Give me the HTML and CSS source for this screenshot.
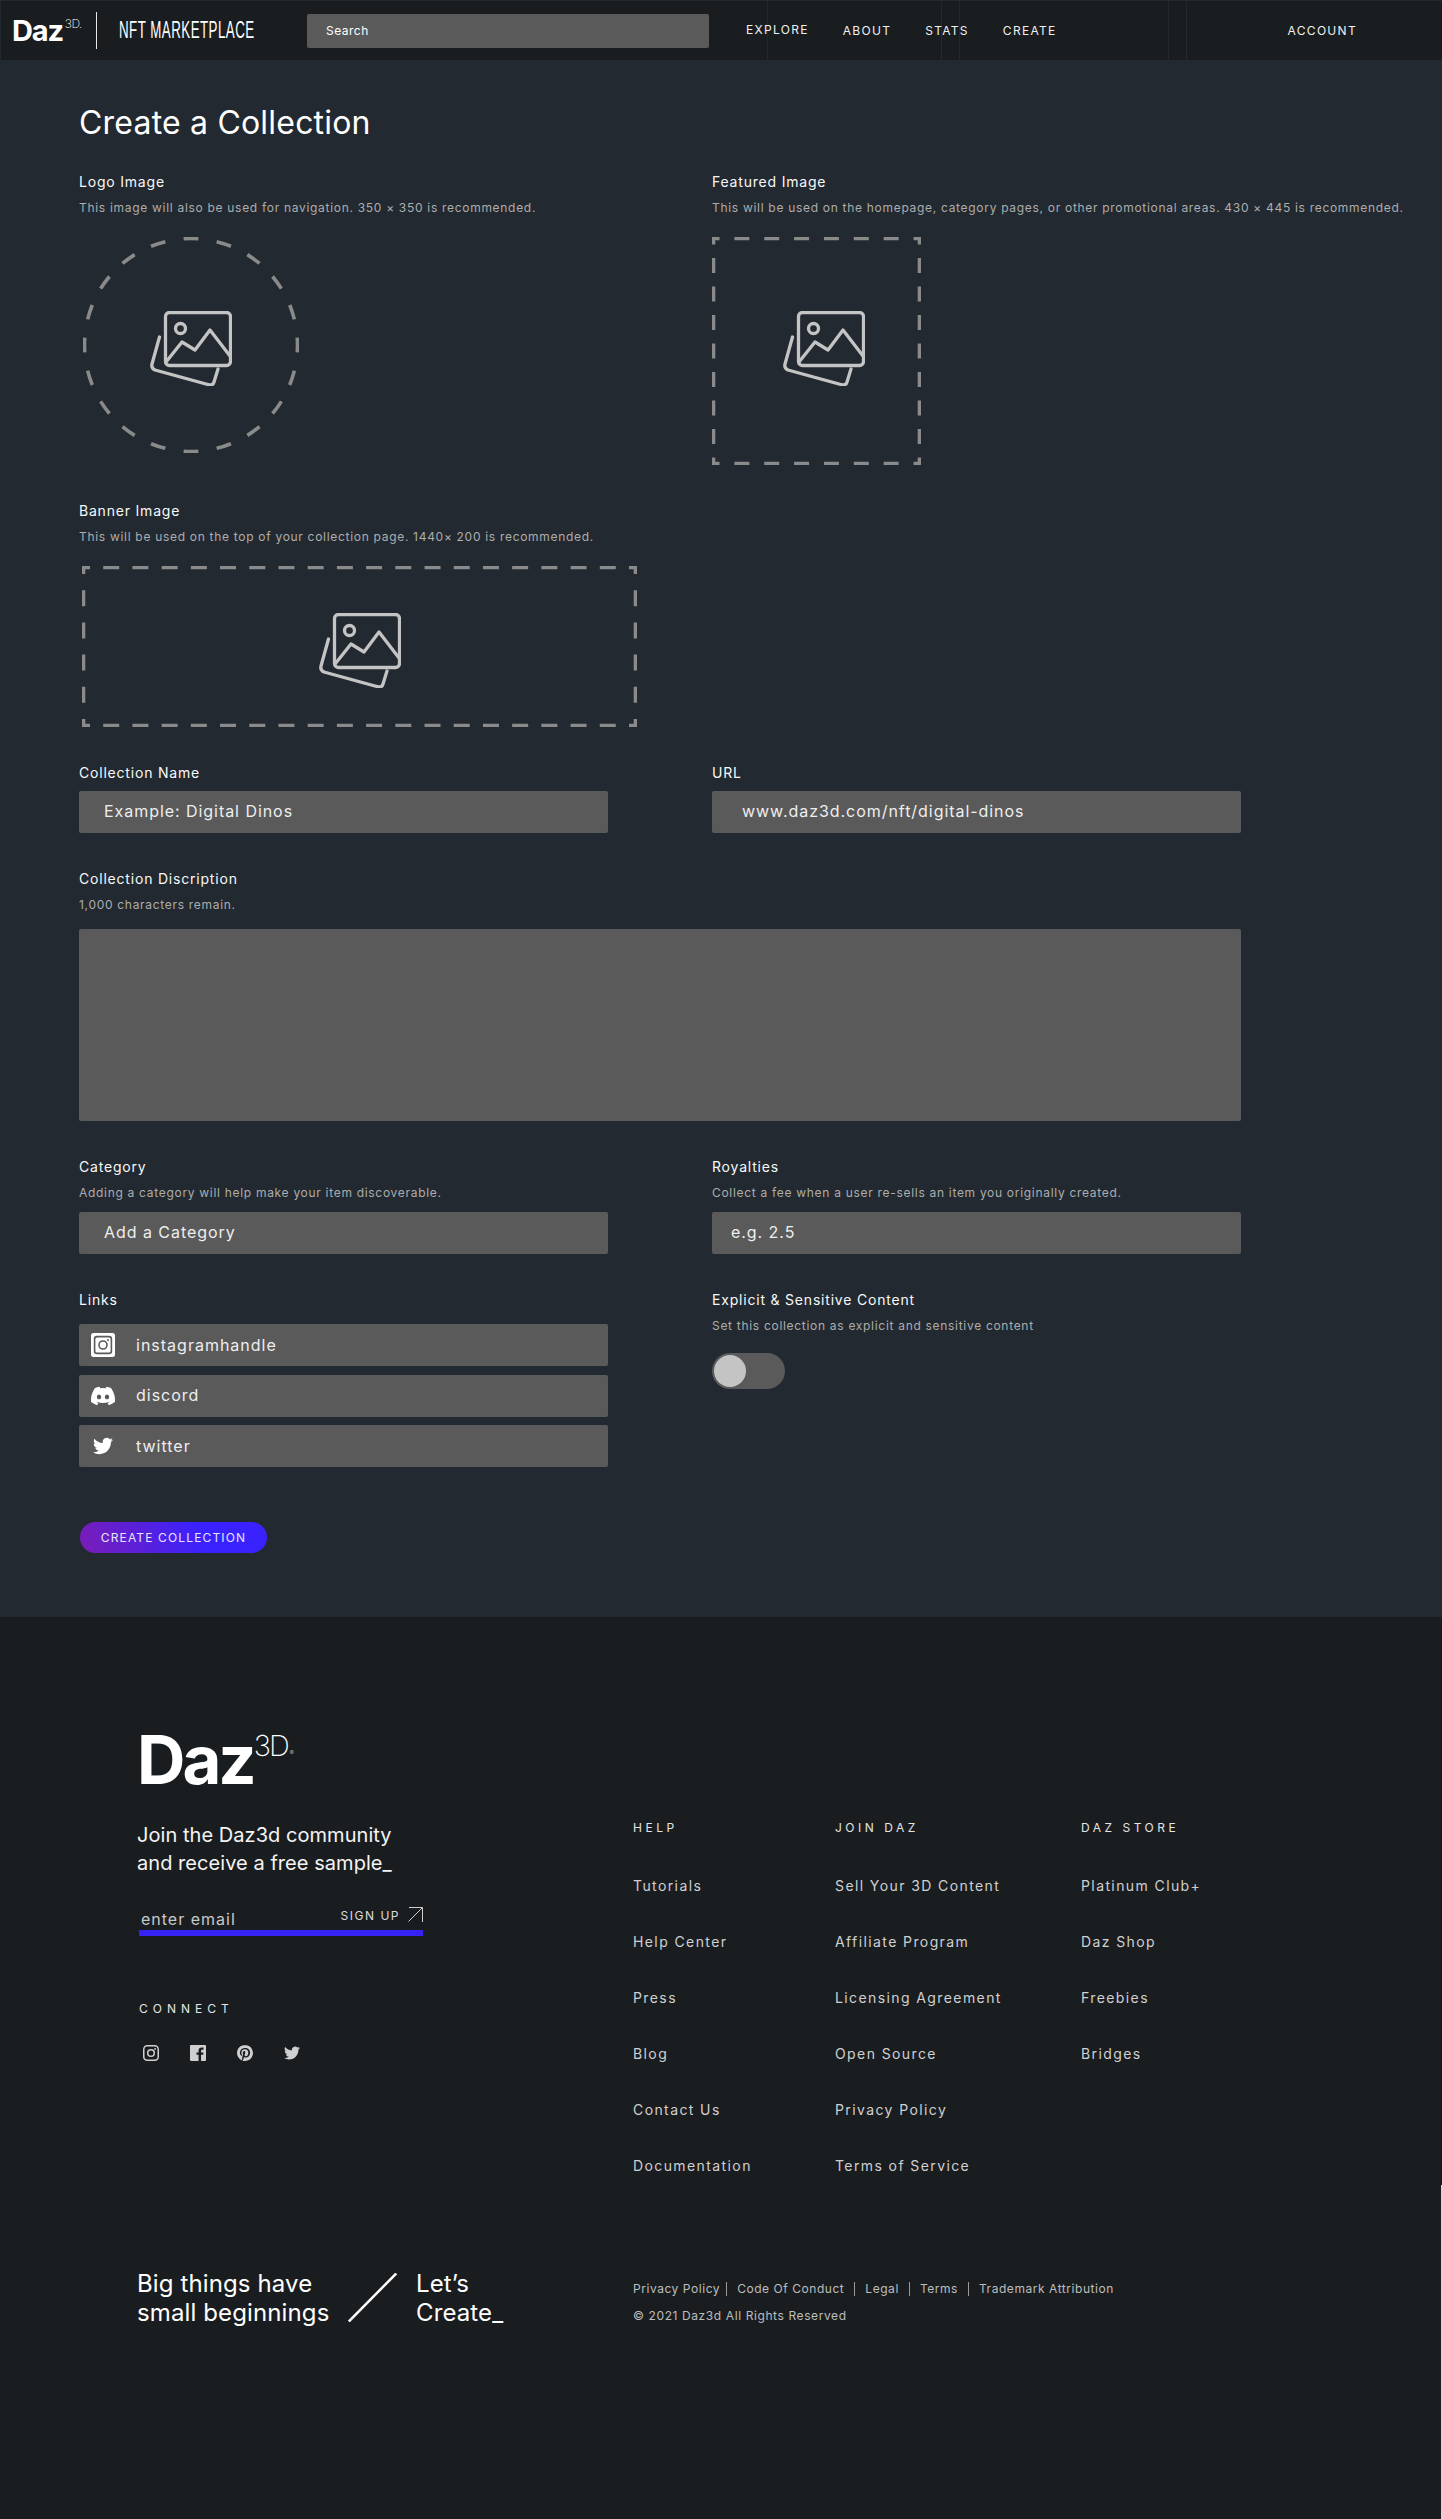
FILE: index.html
```html
<!DOCTYPE html>
<html lang="en">
<head>
  <meta charset="UTF-8" />
  <title>Create a Collection - Daz3D NFT Marketplace</title>
  <link rel="stylesheet" href="styles.css">
</head>
<body>
  <svg class="sprite" width="0" height="0">
    <symbol id="picture" viewBox="0 0 82 75">
      <g fill="none" stroke="currentColor" stroke-width="3.3" stroke-linecap="round" stroke-linejoin="round">
        <rect x="15.5" y="1.5" width="65" height="53" rx="4" />
        <circle cx="30.5" cy="17.5" r="5" />
        <path d="M16 51 L32 31 L45 39 L60 19 L80 45" />
        <path d="M9.5 26 L2 53 Q1 57 5 59 L58 73.5 Q63 75 64 71 L68 58" />
      </g>
    </symbol>
    <symbol id="twitter" viewBox="0 0 24 24">
      <path fill="currentColor" d="M23.953 4.57a10 10 0 01-2.825.775 4.958 4.958 0 002.163-2.723c-.951.555-2.005.959-3.127 1.184a4.92 4.92 0 00-8.384 4.482C7.69 8.095 4.067 6.13 1.64 3.162a4.822 4.822 0 00-.666 2.475c0 1.71.87 3.213 2.188 4.096a4.904 4.904 0 01-2.228-.616v.06a4.923 4.923 0 003.946 4.827 4.996 4.996 0 01-2.212.085 4.936 4.936 0 004.604 3.417 9.867 9.867 0 01-6.102 2.105c-.39 0-.779-.023-1.17-.067a13.995 13.995 0 007.557 2.209c9.053 0 13.998-7.496 13.998-13.985 0-.21 0-.42-.015-.63A9.935 9.935 0 0024 4.59z" />
    </symbol>
  </svg>

  <header class="topbar">
    <div class="brand">
      <span class="brand-daz">Daz</span><span class="brand-3d">3D.</span>
    </div>
    <div class="brand-title"><span>NFT MARKETPLACE</span></div>
    <div class="search">Search</div>
    <nav class="nav">
      <a class="nav-raised">EXPLORE</a>
      <a>ABOUT</a>
      <a>STATS</a>
      <a>CREATE</a>
    </nav>
    <a class="account">ACCOUNT</a>
  </header>

  <main class="page">
    <h1>Create a Collection</h1>

    <div class="row row-first">
      <section>
        <div class="label">Logo Image</div>
        <div class="hint">This image will also be used for navigation. 350 × 350 is recommended.</div>
        <div class="drop drop-logo">
          <svg class="dashes" width="216" height="216">
            <circle cx="108" cy="108" r="106.5" pathLength="20" stroke-dasharray="0.45 0.55" stroke-dashoffset="0.225" />
          </svg>
          <svg class="picture"><use href="#picture" /></svg>
        </div>
      </section>
      <section>
        <div class="label">Featured Image</div>
        <div class="hint nowrap">This will be used on the homepage, category pages, or other promotional areas. 430 × 445 is recommended.</div>
        <div class="drop drop-featured">
          <svg class="dashes" width="209" height="228">
            <line x1="0" y1="1.5" x2="209" y2="1.5" stroke-dasharray="15 14.86" stroke-dashoffset="7.5" />
            <line x1="0" y1="226.5" x2="209" y2="226.5" stroke-dasharray="15 14.86" stroke-dashoffset="7.5" />
            <line x1="1.5" y1="0" x2="1.5" y2="228" stroke-dasharray="15 13.5" stroke-dashoffset="7.5" />
            <line x1="207.5" y1="0" x2="207.5" y2="228" stroke-dasharray="15 13.5" stroke-dashoffset="7.5" />
          </svg>
          <svg class="picture"><use href="#picture" /></svg>
        </div>
      </section>
    </div>

    <section class="block">
      <div class="label">Banner Image</div>
      <div class="hint">This will be used on the top of your collection page. 1440× 200 is recommended.</div>
      <div class="drop drop-banner">
        <svg class="dashes" width="555" height="161">
          <line x1="0" y1="1.5" x2="555" y2="1.5" stroke-dasharray="16 13.21" stroke-dashoffset="8" />
          <line x1="0" y1="159.5" x2="555" y2="159.5" stroke-dasharray="16 13.21" stroke-dashoffset="8" />
          <line x1="1.5" y1="0" x2="1.5" y2="161" stroke-dasharray="16 16.2" stroke-dashoffset="8" />
          <line x1="553.5" y1="0" x2="553.5" y2="161" stroke-dasharray="16 16.2" stroke-dashoffset="8" />
        </svg>
        <svg class="picture"><use href="#picture" /></svg>
      </div>
    </section>

    <div class="row block">
      <section>
        <div class="label label-tight">Collection Name</div>
        <div class="field">Example: Digital Dinos</div>
      </section>
      <section>
        <div class="label label-tight">URL</div>
        <div class="field field-url">www.daz3d.com/nft/digital-dinos</div>
      </section>
    </div>

    <section class="block">
      <div class="label">Collection Discription</div>
      <div class="hint">1,000 characters remain.</div>
      <div class="textarea"></div>
    </section>

    <div class="row block">
      <section>
        <div class="label">Category</div>
        <div class="hint">Adding a category will help make your item discoverable.</div>
        <div class="field field-hinted">Add a Category</div>
      </section>
      <section>
        <div class="label">Royalties</div>
        <div class="hint">Collect a fee when a user re-sells an item you originally created.</div>
        <div class="field field-hinted field-royalty">e.g. 2.5</div>
      </section>
    </div>

    <div class="row block">
      <section>
        <div class="label">Links</div>
        <div class="links">
          <div class="link-row">
            <svg class="link-icon" viewBox="0 0 24 24">
              <rect width="24" height="24" rx="2.5" fill="#fff" />
              <rect x="3.6" y="3.6" width="16.8" height="16.8" rx="2.5" fill="none" stroke="#5a5a5a" stroke-width="1.6" />
              <circle cx="12" cy="12" r="4" fill="none" stroke="#5a5a5a" stroke-width="1.6" />
              <circle cx="17" cy="7" r="1" fill="#5a5a5a" />
            </svg>
            instagramhandle
          </div>
          <div class="link-row">
            <svg class="link-icon" viewBox="0 0 24 24">
              <path fill="#fff" d="M20.317 4.37a19.791 19.791 0 0 0-4.885-1.515.074.074 0 0 0-.079.037c-.21.375-.444.864-.608 1.25a18.27 18.27 0 0 0-5.487 0 12.64 12.64 0 0 0-.617-1.25.077.077 0 0 0-.079-.037A19.736 19.736 0 0 0 3.677 4.37a.07.07 0 0 0-.032.027C.533 9.046-.32 13.58.099 18.057a.082.082 0 0 0 .031.057 19.9 19.9 0 0 0 5.993 3.03.078.078 0 0 0 .084-.028 14.09 14.09 0 0 0 1.226-1.994.076.076 0 0 0-.041-.106 13.107 13.107 0 0 1-1.872-.892.077.077 0 0 1-.008-.128 10.2 10.2 0 0 0 .372-.292.074.074 0 0 1 .077-.01c3.928 1.793 8.18 1.793 12.062 0a.074.074 0 0 1 .078.01c.12.098.246.198.373.292a.077.077 0 0 1-.006.127 12.299 12.299 0 0 1-1.873.892.077.077 0 0 0-.041.107c.36.698.772 1.362 1.225 1.993a.076.076 0 0 0 .084.028 19.839 19.839 0 0 0 6.002-3.03.077.077 0 0 0 .032-.054c.5-5.177-.838-9.674-3.549-13.66a.061.061 0 0 0-.031-.03zM8.02 15.33c-1.183 0-2.157-1.085-2.157-2.419 0-1.333.956-2.419 2.157-2.419 1.21 0 2.176 1.096 2.157 2.42 0 1.333-.956 2.418-2.157 2.418zm7.975 0c-1.183 0-2.157-1.085-2.157-2.419 0-1.333.955-2.419 2.157-2.419 1.21 0 2.176 1.096 2.157 2.42 0 1.333-.946 2.418-2.157 2.418z" />
            </svg>
            discord
          </div>
          <div class="link-row">
            <svg class="link-icon link-icon-small"><use href="#twitter" /></svg>
            twitter
          </div>
        </div>
      </section>
      <section>
        <div class="label">Explicit &amp; Sensitive Content</div>
        <div class="hint">Set this collection as explicit and sensitive content</div>
        <div class="toggle"><span class="knob"></span></div>
      </section>
    </div>

    <button class="create">CREATE COLLECTION</button>
  </main>

  <footer class="footer">
    <div class="footer-top">
      <div class="footer-left">
        <div class="footer-logo">
          <span class="logo-daz">Daz</span><span class="logo-3d">3D</span><span class="logo-reg">®</span>
        </div>
        <p class="join">Join the Daz3d community<br>and receive a free sample_</p>
        <div class="signup">
          <span class="email">enter email</span>
          <span class="signup-btn">SIGN UP
            <svg class="arrow" width="15" height="15" viewBox="0 0 15 15">
              <path d="M0.5 14.5 L14.5 0.5 M1 0.5 H14.5 V15" fill="none" stroke="#d0d0d0" stroke-width="1" />
            </svg>
          </span>
        </div>
        <div class="heading connect">CONNECT</div>
        <div class="socials">
          <svg viewBox="0 0 16 16">
            <rect x="0.75" y="0.75" width="14.5" height="14.5" rx="3.5" fill="none" stroke="currentColor" stroke-width="1.5" />
            <circle cx="8" cy="8" r="3.3" fill="none" stroke="currentColor" stroke-width="1.5" />
            <circle cx="12.1" cy="3.9" r="0.9" fill="currentColor" />
          </svg>
          <svg viewBox="0 0 24 24">
            <path fill="currentColor" d="M22.675 0H1.325C.593 0 0 .593 0 1.325v21.351C0 23.407.593 24 1.325 24H12.82v-9.294H9.692v-3.622h3.128V8.413c0-3.1 1.893-4.788 4.659-4.788 1.325 0 2.463.099 2.795.143v3.24l-1.918.001c-1.504 0-1.795.715-1.795 1.763v2.313h3.587l-.467 3.622h-3.12V24h6.116c.73 0 1.323-.593 1.323-1.325V1.325C24 .593 23.407 0 22.675 0z" />
          </svg>
          <svg viewBox="0 0 24 24">
            <path fill="currentColor" d="M12.017 0C5.396 0 .029 5.367.029 11.987c0 5.079 3.158 9.417 7.618 11.162-.105-.949-.199-2.403.041-3.439.219-.937 1.406-5.957 1.406-5.957s-.359-.72-.359-1.781c0-1.663.967-2.911 2.168-2.911 1.024 0 1.518.769 1.518 1.688 0 1.029-.653 2.567-.992 3.992-.285 1.193.6 2.165 1.775 2.165 2.128 0 3.768-2.245 3.768-5.487 0-2.861-2.063-4.869-5.008-4.869-3.41 0-5.409 2.562-5.409 5.199 0 1.033.394 2.143.889 2.741.099.12.112.225.085.345-.09.375-.293 1.199-.334 1.363-.053.225-.172.271-.401.165-1.495-.69-2.433-2.878-2.433-4.646 0-3.776 2.748-7.252 7.92-7.252 4.158 0 7.392 2.967 7.392 6.923 0 4.135-2.607 7.462-6.233 7.462-1.214 0-2.354-.629-2.758-1.379l-.749 2.848c-.269 1.045-1.004 2.352-1.498 3.146 1.123.345 2.306.535 3.55.535 6.607 0 11.985-5.365 11.985-11.987C23.97 5.39 18.592.026 11.985.026L12.017 0z" />
          </svg>
          <svg><use href="#twitter" /></svg>
        </div>
      </div>

      <div class="footer-cols">
        <div class="col col-help">
          <div class="heading">HELP</div>
          <a>Tutorials</a>
          <a>Help Center</a>
          <a>Press</a>
          <a>Blog</a>
          <a>Contact Us</a>
          <a>Documentation</a>
        </div>
        <div class="col col-join">
          <div class="heading">JOIN DAZ</div>
          <a>Sell Your 3D Content</a>
          <a>Affiliate Program</a>
          <a>Licensing Agreement</a>
          <a>Open Source</a>
          <a>Privacy Policy</a>
          <a>Terms of Service</a>
        </div>
        <div class="col">
          <div class="heading">DAZ STORE</div>
          <a>Platinum Club+</a>
          <a>Daz Shop</a>
          <a>Freebies</a>
          <a>Bridges</a>
        </div>
      </div>
    </div>

    <div class="footer-bottom">
      <div class="tagline">
        <div class="tag-text">Big things have<br>small beginnings</div>
        <svg class="slash" width="49" height="49" viewBox="0 0 49 49">
          <line x1="0.8" y1="48.5" x2="48.2" y2="0.5" stroke="#fff" stroke-width="2.5" />
        </svg>
        <div class="tag-text">Let’s<br>Create_</div>
      </div>
      <div class="legal">
        <div class="legal-links">
          <a>Privacy Policy</a>
          <a>Code Of Conduct</a>
          <a>Legal</a>
          <a>Terms</a>
          <a>Trademark Attribution</a>
        </div>
        <div class="copyright">© 2021 Daz3d All Rights Reserved</div>
      </div>
    </div>
  </footer>
</body>
</html>
```

FILE: styles.css
```css
* {
  box-sizing: border-box;
}

body {
  font-family: 'Inter', 'Liberation Sans', sans-serif;
  margin: 0;
  min-height: 100vh;
  display: flex;
  flex-direction: column;
  background-color: #222930;
  color: #fff;
}

.sprite {
  position: absolute;
}

/* top bar */
.topbar {
  display: flex;
  align-items: center;
  flex-shrink: 0;
  height: 59px;
  margin: 1px 0 0 1px;
  padding-left: 11px;
  background-color: #1a1d20;
  background-image:
    linear-gradient(#25292d, #25292d),
    linear-gradient(#25292d, #25292d),
    linear-gradient(#25292d, #25292d),
    linear-gradient(#25292d, #25292d),
    linear-gradient(#25292d, #25292d);
  background-size: 1px 100%;
  background-repeat: no-repeat;
  background-position: 766px 0, 940px 0, 958px 0, 1167px 0, 1185px 0;
}

.brand {
  display: flex;
  width: 85px;
  height: 37px;
  border-right: 1px solid #e8e8e8;
  align-items: flex-start;
}

.brand-daz {
  margin-top: 3px;
  font-size: 29px;
  line-height: 32px;
  font-weight: 700;
  letter-spacing: -1.2px;
}

.brand-3d {
  margin-top: 5px;
  margin-left: 2px;
  font-size: 12px;
  line-height: 14px;
  font-weight: 200;
  letter-spacing: -0.5px;
}

.brand-title {
  width: 210px;
  padding-left: 22px;
  font-family: 'Liberation Sans Narrow', 'Liberation Sans', sans-serif;
  font-size: 23px;
  letter-spacing: 0.8px;
  white-space: nowrap;
}

.brand-title span {
  display: inline-block;
  transform: scaleX(0.58);
  transform-origin: left center;
}

.search {
  width: 402px;
  height: 34px;
  padding-left: 19px;
  background-color: #5a5a5a;
  border-radius: 2px;
  font-size: 12px;
  line-height: 34px;
  letter-spacing: 0.5px;
}

.nav {
  display: flex;
  gap: 34px;
  margin-left: 37px;
}

.nav a,
.account {
  font-size: 12px;
  line-height: 16px;
  letter-spacing: 1.3px;
  color: #f0f0f0;
}

.nav-raised {
  transform: translateY(-1px);
}

.account {
  margin-left: auto;
  margin-right: 85px;
}

/* form */
.page {
  flex-shrink: 0;
  padding: 43px 0 64px 79px;
}

h1 {
  margin: 0;
  font-size: 32px;
  line-height: 40px;
  font-weight: 400;
  letter-spacing: 0.2px;
}

.row {
  display: grid;
  grid-template-columns: 529px 529px;
  column-gap: 104px;
}

.row-first {
  margin-top: 29px;
}

.block {
  margin-top: 36px;
}

.label {
  font-size: 14px;
  line-height: 20px;
  letter-spacing: 0.8px;
  color: #f8f8f8;
}

.hint {
  margin-top: 8px;
  font-size: 12px;
  line-height: 16px;
  letter-spacing: 0.7px;
  color: #adadad;
}

.nowrap {
  white-space: nowrap;
}

.drop {
  position: relative;
  display: flex;
  align-items: center;
  justify-content: center;
  margin-top: 21px;
}

.drop-logo {
  width: 216px;
  height: 216px;
  margin-left: 4px;
  padding-top: 7px;
}

.drop-featured {
  width: 209px;
  height: 228px;
  padding: 0 0 5px 15px;
}

.drop-banner {
  width: 555px;
  height: 161px;
  margin-left: 3px;
  padding-top: 8px;
}

.dashes {
  position: absolute;
  left: 0;
  top: 0;
  fill: none;
  stroke: #8a8a8a;
  stroke-width: 3.6;
}

.picture {
  width: 82px;
  height: 75px;
  color: #c4c4c4;
}

.field {
  height: 42px;
  margin-top: 8px;
  padding-left: 25px;
  background-color: #5a5a5a;
  border-radius: 2px;
  font-size: 16px;
  line-height: 41px;
  letter-spacing: 0.95px;
  color: #eee;
}

.field-url {
  padding-left: 30px;
}

.field-hinted {
  margin-top: 11px;
}

.field-royalty {
  padding-left: 19px;
}

.textarea {
  width: 1162px;
  height: 192px;
  margin-top: 16px;
  background-color: #5a5a5a;
  border-radius: 2px;
}

.links {
  display: flex;
  flex-direction: column;
  gap: 8.5px;
  margin-top: 14px;
}

.link-row {
  display: flex;
  align-items: center;
  height: 42px;
  padding-left: 12px;
  background-color: #5a5a5a;
  border-radius: 2px;
  font-size: 16px;
  line-height: 41px;
  letter-spacing: 1px;
  color: #eee;
}

.link-icon {
  width: 24px;
  height: 24px;
  margin-right: 21px;
  flex-shrink: 0;
}

.link-icon-small {
  color: #fff;
  padding: 2px;
}

.toggle {
  display: flex;
  align-items: center;
  width: 73px;
  height: 36px;
  margin-top: 19px;
  padding-left: 2px;
  background-color: #5a5a5a;
  border-radius: 18px;
}

.knob {
  width: 32px;
  height: 32px;
  background-color: #c4c4c4;
  border-radius: 50%;
}

.create {
  display: block;
  width: 187px;
  height: 31px;
  margin: 55px 0 0 1px;
  padding: 0;
  border: none;
  border-radius: 16px;
  background: linear-gradient(70deg, #7a1db5, #3a22ff 65%);
  color: #e8e4ff;
  font-family: inherit;
  font-size: 12px;
  letter-spacing: 1.15px;
}

/* footer */
.footer {
  position: relative;
  flex: 1;
  padding: 118px 0 0 137px;
  background-color: #1a1d20;
}

.footer::after {
  content: "";
  position: absolute;
  right: 0;
  top: 568px;
  bottom: 0;
  width: 1px;
  background-color: #d8d8d8;
}

.footer-top {
  display: flex;
}

.footer-left {
  width: 496px;
}

.footer-logo {
  display: flex;
  align-items: flex-start;
  height: 49px;
}

.logo-daz {
  font-size: 67px;
  line-height: 49px;
  font-weight: 700;
  letter-spacing: -3px;
}

.logo-3d {
  margin-left: 0;
  font-size: 29px;
  line-height: 21px;
  font-weight: 200;
  letter-spacing: -2px;
}

.logo-reg {
  margin-left: 2px;
  margin-top: 14px;
  font-size: 6px;
  line-height: 8px;
  color: #b0b0b0;
}

.join {
  margin: 37px 0 0;
  font-size: 20px;
  line-height: 28px;
  letter-spacing: 0.05px;
  color: #f4f4f4;
}

.signup {
  display: flex;
  justify-content: space-between;
  width: 284px;
  height: 29px;
  margin: 30px 0 0 2px;
  border-bottom: 6px solid #3622f5;
}

.email {
  padding: 2px 0 0 2px;
  font-size: 16px;
  line-height: 20px;
  letter-spacing: 1px;
  color: #c8c8c8;
}

.signup-btn {
  display: flex;
  align-items: flex-start;
  gap: 8px;
  font-size: 12px;
  line-height: 17px;
  letter-spacing: 1.5px;
  color: #ddd;
}

.heading {
  font-size: 12px;
  line-height: 16px;
  letter-spacing: 5px;
  color: #e4e4e4;
}

.connect {
  margin: 65px 0 0 2px;
}

.socials {
  display: flex;
  gap: 31px;
  margin: 28px 0 0 6px;
  color: #d0d0d0;
}

.socials svg {
  width: 16px;
  height: 16px;
}

.footer-cols {
  display: flex;
  margin-top: 85px;
}

.col {
  display: flex;
  flex-direction: column;
  gap: 36px;
}

.col .heading {
  margin-bottom: 4px;
  letter-spacing: 3.5px;
}

.col-help {
  width: 202px;
}

.col-join {
  width: 246px;
}

.col a {
  font-size: 14px;
  line-height: 20px;
  letter-spacing: 1.4px;
  color: #d0d0d0;
}

.footer-bottom {
  display: flex;
  margin-top: 93px;
}

.tagline {
  display: flex;
  align-items: flex-start;
  width: 496px;
}

.tag-text {
  font-size: 24px;
  line-height: 29px;
  letter-spacing: 0.12px;
}

.tagline .tag-text:first-child {
  width: 211px;
}

.slash {
  margin-top: 4px;
  margin-right: 19px;
}

.legal {
  margin-top: 13px;
}

.legal-links {
  display: flex;
  font-size: 12px;
  line-height: 14px;
  letter-spacing: 0.55px;
  color: #bdbdbd;
}

.legal-links a {
  padding: 0 10px;
  border-right: 1px solid #9a9a9a;
}

.legal-links a:first-child {
  padding-left: 0;
  padding-right: 6px;
}

.legal-links a:last-child {
  border-right: none;
}

.copyright {
  margin-top: 13px;
  font-size: 12px;
  line-height: 14px;
  letter-spacing: 0.6px;
  color: #bdbdbd;
}
```
